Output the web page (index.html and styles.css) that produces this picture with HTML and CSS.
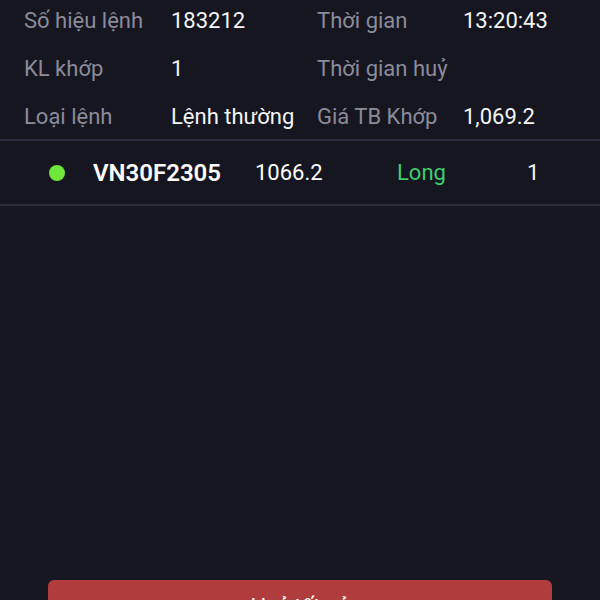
FILE: index.html
```html
<!DOCTYPE html>
<html lang="vi">
<head>
<meta charset="utf-8">
<link rel="stylesheet" href="styles.css">
</head>
<body>
<div class="screen">
  <div class="info">
    <div class="label">Số hiệu lệnh</div>
    <div class="value">183212</div>
    <div class="label">Thời gian</div>
    <div class="value">13:20:43</div>
    <div class="label">KL khớp</div>
    <div class="value">1</div>
    <div class="label">Thời gian huỷ</div>
    <div class="value"></div>
    <div class="label">Loại lệnh</div>
    <div class="value">Lệnh thường</div>
    <div class="label">Giá TB Khớp</div>
    <div class="value">1,069.2</div>
  </div>
  <div class="position">
    <span class="dot"></span>
    <span class="symbol">VN30F2305</span>
    <span class="price">1066.2</span>
    <span class="side">Long</span>
    <span class="qty">1</span>
  </div>
  <div class="spacer"></div>
  <button class="cancel">Huỷ tất cả</button>
</div>
</body>
</html>
```
FILE: styles.css
```css
html, body {
  margin: 0;
  padding: 0;
  background: #161621;
}
.screen {
  height: 600px;
  overflow: hidden;
  display: flex;
  flex-direction: column;
  font-family: Roboto, "Noto Sans", sans-serif;
  font-size: 22px;
  color: #ffffff;
}
.screen > * {
  flex: none;
}
.info {
  display: grid;
  grid-template-columns: 147px 146px 146px 1fr;
  grid-auto-rows: 40px;
  row-gap: 8px;
  padding-left: 24px;
  align-items: center;
  border-bottom: 2px solid #2a2e3e;
  height: 141px;
  box-sizing: border-box;
}
.label {
  color: #8b8b99;
  white-space: nowrap;
}
.value {
  color: #f4f4f6;
  white-space: nowrap;
}
.position {
  display: flex;
  align-items: center;
  height: 63px;
  border-bottom: 2px solid #2a2e3e;
  padding-left: 49px;
}
.dot {
  width: 16px;
  height: 16px;
  border-radius: 50%;
  background: #6fe63a;
  flex: none;
}
.symbol {
  margin-left: 28px;
  width: 162px;
  font-weight: 600;
  font-size: 24px;
}
.price {
  width: 142px;
}
.side {
  width: 130px;
  color: #3fcd6c;
}
.qty {
  color: #f4f4f6;
}
.spacer {
  height: 374px;
}
.cancel {
  margin-left: 48px;
  width: 504px;
  height: 52px;
  border: none;
  border-radius: 6px;
  background: #b13c3e;
  color: #ffffff;
  font-family: Roboto, "Noto Sans", sans-serif;
  font-size: 22px;
  padding: 0;
}
```
